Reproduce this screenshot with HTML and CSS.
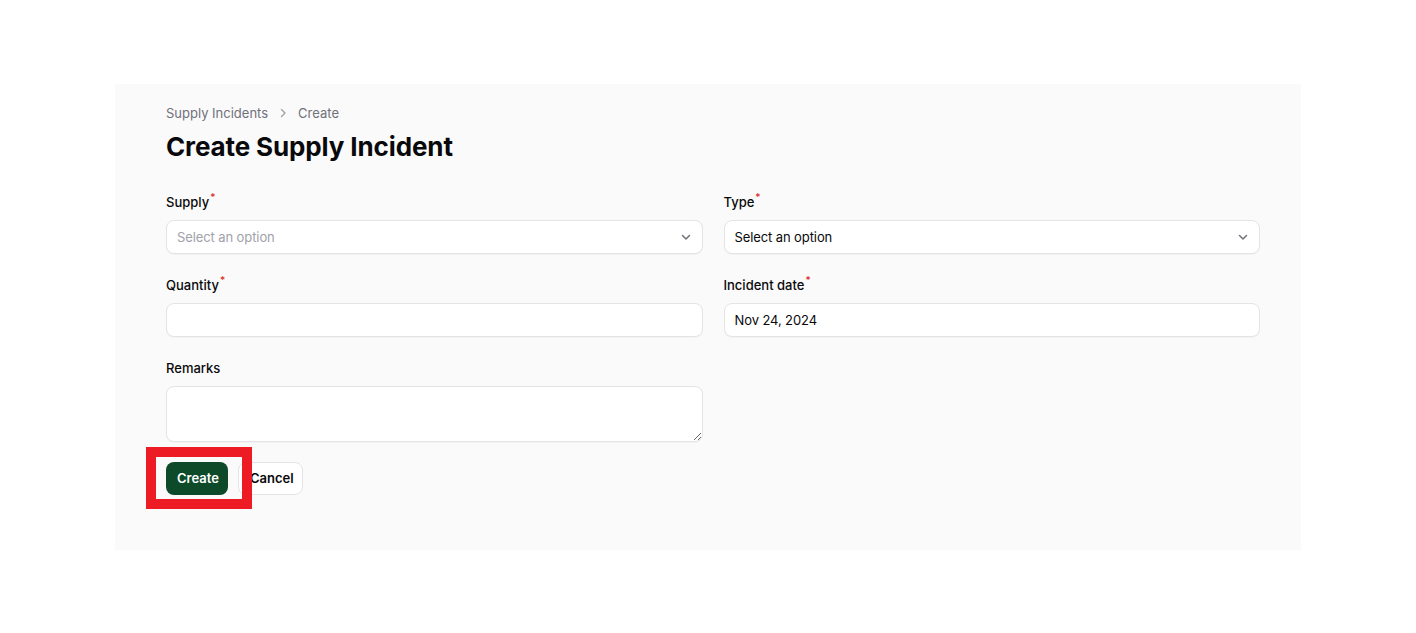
FILE: index.html
```html
<!DOCTYPE html>
<html lang="en">
<head>
<meta charset="utf-8">
<title>Create Supply Incident</title>
<link rel="stylesheet" href="styles.css">
</head>
<body>
<main class="panel">
  <nav class="breadcrumb">
    <span>Supply Incidents</span>
    <svg class="crumb-sep" width="12" height="12" viewBox="0 0 12 12"><path d="M4.5 2.5L8 6l-3.5 3.5" fill="none" stroke="currentColor" stroke-width="1.4" stroke-linecap="round" stroke-linejoin="round"/></svg>
    <span>Create</span>
  </nav>
  <h1 class="title">Create Supply Incident</h1>
  <form class="form">
    <div class="grid">
      <div class="field">
        <label class="label">Supply<sup class="req">*</sup></label>
        <div class="control select">
          <span class="placeholder">Select an option</span>
          <svg class="chev" width="14" height="14" viewBox="0 0 14 14"><path d="M3.5 5.5L7 9l3.5-3.5" fill="none" stroke="currentColor" stroke-width="1.5" stroke-linecap="round" stroke-linejoin="round"/></svg>
        </div>
      </div>
      <div class="field">
        <label class="label">Type<sup class="req">*</sup></label>
        <div class="control select">
          <span class="value">Select an option</span>
          <svg class="chev" width="14" height="14" viewBox="0 0 14 14"><path d="M3.5 5.5L7 9l3.5-3.5" fill="none" stroke="currentColor" stroke-width="1.5" stroke-linecap="round" stroke-linejoin="round"/></svg>
        </div>
      </div>
      <div class="field">
        <label class="label">Quantity<sup class="req">*</sup></label>
        <div class="control"></div>
      </div>
      <div class="field">
        <label class="label">Incident date<sup class="req">*</sup></label>
        <div class="control"><span class="value">Nov 24, 2024</span></div>
      </div>
      <div class="field">
        <label class="label">Remarks</label>
        <textarea class="textarea"></textarea>
      </div>
    </div>
    <div class="actions">
      <button type="button" class="btn btn-primary">Create<span class="highlight"></span></button>
      <button type="button" class="btn btn-secondary">Cancel</button>
    </div>
  </form>
</main>
</body>
</html>
```
FILE: styles.css
```css
* { box-sizing: border-box; }
html, body { margin: 0; padding: 0; background: #ffffff; }
body {
  font-family: Inter, "Noto Sans", "Liberation Sans", sans-serif;
  color: #09090b;
  padding-top: 84px;
  padding-left: 115px;
}
.panel {
  width: 1186px;
  height: 466px;
  background: #fafafa;
  padding: 19px 41px 0 51px;
}
.breadcrumb {
  display: flex;
  align-items: center;
  gap: 8px;
  height: 20px;
  font-size: 13px;
  font-weight: 400;
  color: #71717a;
}
.crumb-sep { color: #a1a1aa; margin: 0 1px; }
.title {
  margin: 8px 0 0;
  font-size: 26px;
  line-height: 32px;
  font-weight: 700;
  letter-spacing: -0.12px;
  color: #09090b;
}
.form { margin-top: 29px; }
.grid {
  display: grid;
  grid-template-columns: 1fr 1fr;
  column-gap: 21px;
  row-gap: 21px;
}
.field { display: flex; flex-direction: column; gap: 8px; }
.label {
  font-size: 13px;
  line-height: 20px;
  font-weight: 500;
  color: #09090b;
}
.req {
  color: #dc2626;
  font-size: 10px;
  line-height: 0;
  margin-left: 1px;
  vertical-align: 6px;
}
.control {
  height: 34px;
  background: #ffffff;
  border: 1px solid #e4e4e7;
  border-radius: 8px;
  box-shadow: 0 1px 1px rgba(0,0,0,0.03);
  display: flex;
  align-items: center;
  padding: 0 10px;
  font-size: 13px;
}
.select { justify-content: space-between; padding-right: 9px; }
.placeholder { color: #a1a1aa; letter-spacing: -0.1px; }
.value { color: #09090b; letter-spacing: -0.1px; }
.chev { color: #71717a; }
.textarea {
  display: block;
  height: 56px;
  width: 100%;
  background: #ffffff;
  border: 1px solid #e4e4e7;
  border-radius: 8px;
  box-shadow: 0 1px 1px rgba(0,0,0,0.03);
  font-family: inherit;
  font-size: 13px;
  resize: vertical;
  padding: 8px 10px;
}
.actions {
  display: flex;
  gap: 10px;
  margin-top: 20px;
}
.btn {
  height: 33px;
  border-radius: 8px;
  font-family: inherit;
  font-size: 13px;
  font-weight: 600;
  padding: 0 11px 2px;
  cursor: pointer;
}
.btn-primary {
  position: relative;
  width: 62px;
  background: #0c4a2a;
  color: #ffffff;
  border: none;
}
.btn-secondary {
  width: 65px;
  background: #ffffff;
  color: #09090b;
  border: 1px solid #e4e4e7;
}
.highlight {
  position: absolute;
  left: -20px;
  top: -15px;
  width: 106px;
  height: 62px;
  border: 10px solid #ed1c24;
  z-index: 2;
  pointer-events: none;
}
```
